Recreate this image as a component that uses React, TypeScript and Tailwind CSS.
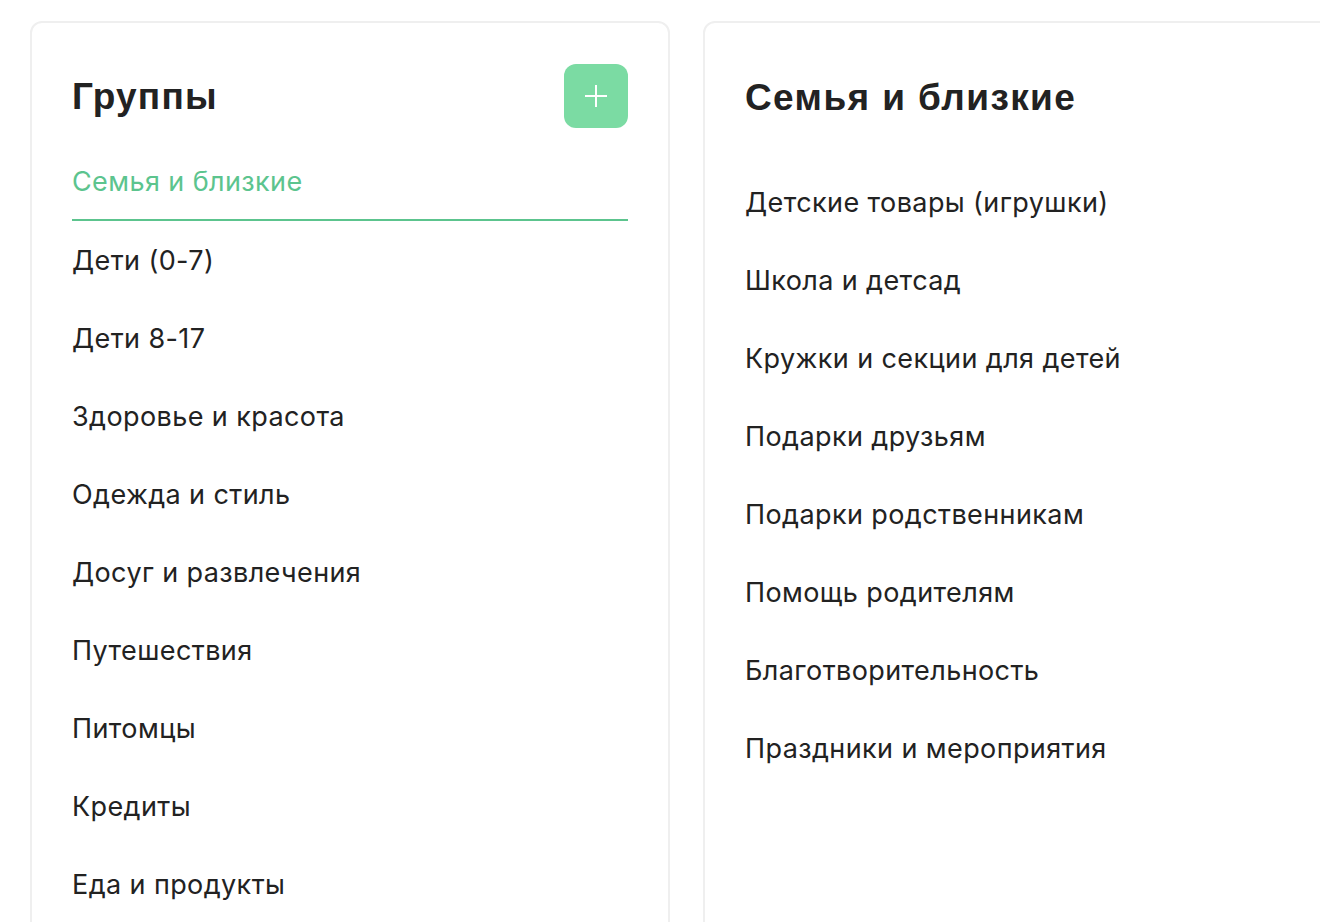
const GROUPS = [
  "Семья и близкие",
  "Дети (0-7)",
  "Дети 8-17",
  "Здоровье и красота",
  "Одежда и стиль",
  "Досуг и развлечения",
  "Путешествия",
  "Питомцы",
  "Кредиты",
  "Еда и продукты",
];

const CATEGORIES = [
  "Детские товары (игрушки)",
  "Школа и детсад",
  "Кружки и секции для детей",
  "Подарки друзьям",
  "Подарки родственникам",
  "Помощь родителям",
  "Благотворительность",
  "Праздники и мероприятия",
];

export default function App() {
  const active = 0;

  return (
    <div className="h-[922px] overflow-hidden bg-white font-['Inter',sans-serif] text-[#222]">
      <div className="flex gap-[33px] pl-[30px] pt-[21px]">
        {/* Groups */}
        <div className="w-[640px] shrink-0 h-[960px] rounded-[12px] border-2 border-[#efefef] px-[40px] pt-[41px]">
          <div className="flex items-center justify-between">
            <h2 className="font-['Liberation_Sans',Arial,sans-serif] text-[37px] font-bold leading-none tracking-[1.2px]">Группы</h2>
            <button className="flex h-[64px] w-[64px] items-center justify-center rounded-[12px] bg-[#7bdba3]">
              <svg width="24" height="24" viewBox="0 0 24 24" fill="none" stroke="white" strokeWidth="2">
                <path d="M12 1v22M1 12h22" />
              </svg>
            </button>
          </div>

          <ul className="mt-[15px]">
            {GROUPS.map((g, i) => (
              <li
                key={g}
                className={
                  i === active
                    ? "flex h-[78px] items-center border-b-2 border-[#5cc48e] pt-[3px] text-[27px] tracking-[0.4px] text-[#5cc48e]"
                    : "flex h-[78px] items-center pt-[2px] text-[27px] tracking-[0.4px]"
                }
              >
                {g}
              </li>
            ))}
          </ul>
        </div>

        {/* Selected group */}
        <div className="w-[700px] shrink-0 h-[960px] rounded-[12px] border-2 border-[#efefef] pl-[40px] pt-[52px]">
          <h2 className="font-['Liberation_Sans',Arial,sans-serif] text-[37px] font-bold leading-[46px] tracking-[1.4px]">Семья и близкие</h2>
          <ul className="mt-[43px]">
            {CATEGORIES.map((c) => (
              <li key={c} className="flex h-[78px] items-center text-[27px] tracking-[0.4px]">
                {c}
              </li>
            ))}
          </ul>
        </div>
      </div>
    </div>
  );
}
